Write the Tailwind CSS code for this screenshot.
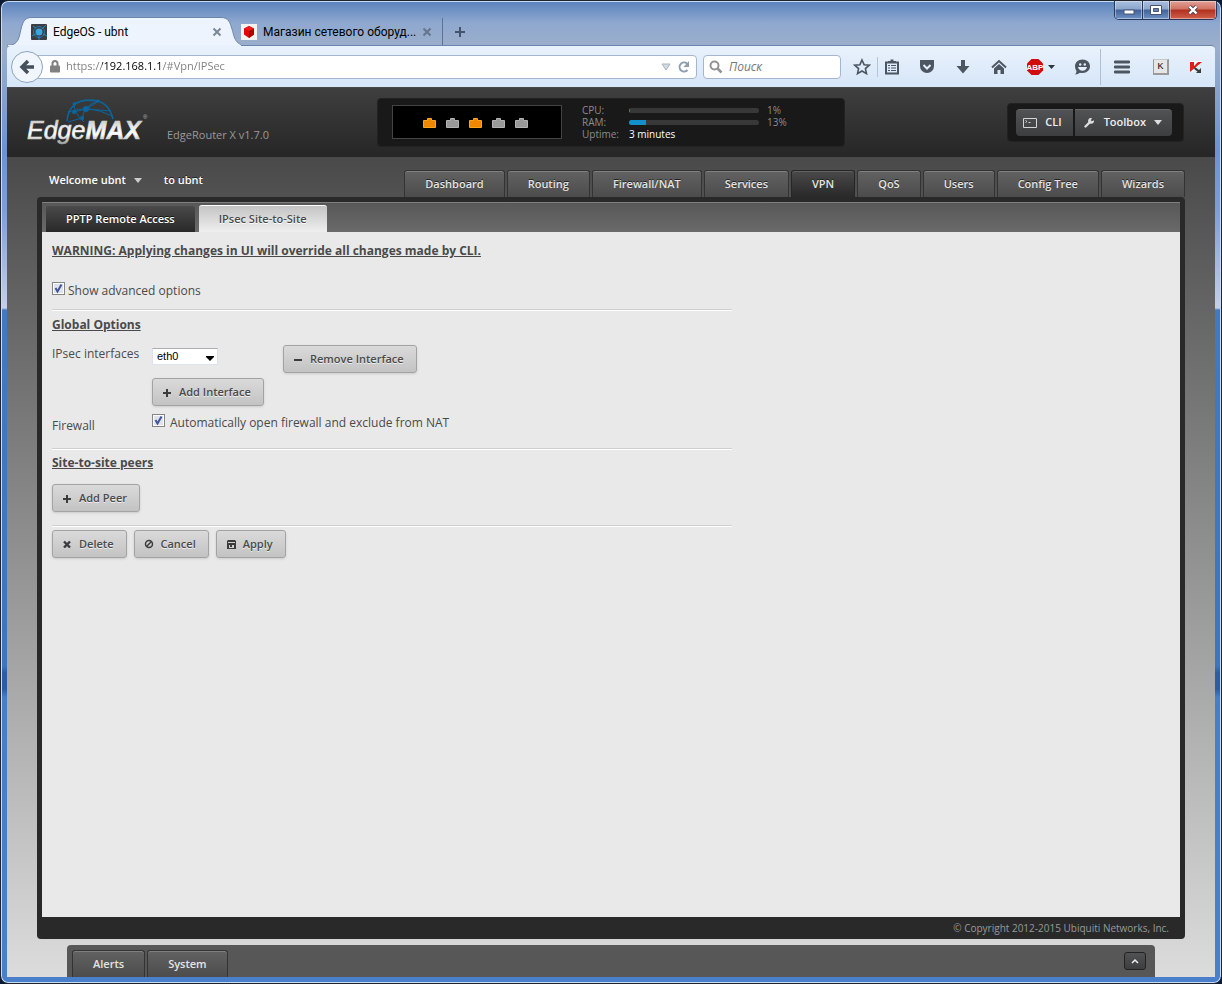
<!DOCTYPE html>
<html lang="en">
<head>
<meta charset="utf-8">
<meta name="viewport" content="width=device-width, initial-scale=1">
<title>EdgeOS - ubnt</title>
<script src="https://cdn.jsdelivr.net/npm/@tailwindcss/browser@4"></script>
</head>
<body class="bg-[#0b1a33] font-['Open_Sans','Noto_Sans',sans-serif] text-xs text-[#4a4a4a]">
<div class="relative flex min-h-screen flex-col rounded-lg border border-[#20242e] bg-[linear-gradient(to_bottom,#5a82bd_0px,#8fa8cf_22px,#9bafcb_45px,#6b93d2_150px,#7d9fd8_210px,#c5cfe8_307px,#4379c4_309px,#3f74c0_665px,#2d5ca5_672px,#2d5ca5_688px,#477dc9_696px,#4a7fcb_100%)] px-[6px] pb-[6px] shadow-[inset_0_0_0_1px_#c9dcf5]">

  <!-- window buttons -->
  <div class="absolute right-1 top-0 flex h-[19px] overflow-hidden rounded-b-[5px] border border-t-0 border-[#27375c]">
    <button aria-label="Minimize" class="flex w-7 items-center justify-center border-r border-[#27375c] bg-[linear-gradient(#a9bfdf,#8ba6cd_45%,#416199_50%,#6f93c6)] shadow-[inset_0_0_0_1px_#ffffff66]">
      <svg class="mt-1" width="12" height="6"><rect x="1" y="1" width="10" height="4" fill="#fff" stroke="#4a5470"/></svg>
    </button>
    <button aria-label="Maximize" class="flex w-[27px] items-center justify-center border-r border-[#27375c] bg-[linear-gradient(#a9bfdf,#8ba6cd_45%,#416199_50%,#6f93c6)] shadow-[inset_0_0_0_1px_#ffffff66]">
      <svg width="12" height="10"><path d="M.5.5h11v9H.5z" fill="#fff" stroke="#4a5470"/><path d="M3.500 3.500h5v3h-5z" fill="#6685b5" stroke="#4a5470"/></svg>
    </button>
    <button aria-label="Close window" class="flex w-[46px] items-center justify-center bg-[linear-gradient(#e2a196,#cf7162_45%,#b1301d_50%,#d0614c)] shadow-[inset_0_0_0_1px_#ffffff66]">
      <svg width="12" height="10"><path d="M2.500 1.500 9.500 8.500M9.500 1.500 2.500 8.500" stroke="#4c4550" stroke-width="4"/><path d="M2.500 1.500 9.500 8.500M9.500 1.500 2.500 8.500" stroke="#fff" stroke-width="2.400"/></svg>
    </button>
  </div>

  <!-- browser tabs -->
  <div class="flex h-11 items-end font-['Roboto','Open_Sans',sans-serif] text-black">
    <div class="relative z-10 -mb-px flex h-[29px] w-[234px] items-center pl-6 pr-[19px]">
      <svg class="absolute inset-0 h-full w-full" viewBox="0 0 234 29" preserveAspectRatio="none"><path d="M0 28.500C12 28.500 12 20 14 12S18 .5 25 .5H214C222 .5 223 6 225 12S227 28.500 240 28.500" fill="#edf4fd" stroke="#6a85ad"/><path d="M1 28.500H234" stroke="#e9f2fc"/></svg>
      <svg class="relative mr-[6px]" width="16" height="16"><rect width="16" height="16" rx="1" fill="#3a3e44"/><circle cx="8" cy="8" r="3.500" fill="#3aa6e0"/><circle cx="8" cy="8" r="5.500" fill="none" stroke="#2477a8"/><path d="M1 12 6 9M10 6 15 1M8 12v4M5 4 2 2M12 10l4 2" stroke="#2c86bd"/></svg>
      <span class="relative flex-1">EdgeOS - ubnt</span>
      <button aria-label="Close tab" class="relative"><svg width="10" height="10"><path d="M1.500 1.500 8.500 8.500M8.500 1.500 1.500 8.500" stroke="#7b8794" stroke-width="2"/></svg></button>
    </div>
    <div class="flex h-[27px] w-[202px] items-center border-r border-[#5d7294] pr-[10px]">
      <svg class="mr-[6px] shrink-0" width="16" height="16"><rect width="16" height="16" fill="#f3f3f3"/><path d="m8 2 5 2.500v6L8 14l-5-3.500v-6z" fill="#e00808"/><path d="m8 7 5-2.500v6L8 14z" fill="#b10000"/><path d="m8 2 5 2.500L8 7 3 4.500z" fill="#f01818"/></svg>
      <span class="flex-1 whitespace-nowrap">Магазин сетевого оборуд...</span>
      <button aria-label="Close tab"><svg width="10" height="10"><path d="M1.500 1.500 8.500 8.500M8.500 1.500 1.500 8.500" stroke="#64748b" stroke-width="2"/></svg></button>
    </div>
    <button aria-label="New tab" class="flex h-[27px] w-[34px] items-center justify-center"><svg width="12" height="12"><path d="M6 1v10M1 6h10" stroke="#45536a" stroke-width="2"/></svg></button>
  </div>

  <!-- navigation toolbar -->
  <div class="flex h-[42px] items-center rounded-t-sm border-t border-[#6a85ad] bg-linear-to-b from-[#e9f2fc] to-[#d6e6f8] pl-1 text-[#4c5661]">
    <button aria-label="Back" class="z-10 flex size-8 items-center justify-center rounded-full border border-[#8fa3bc] bg-[#f1f6fd]">
      <svg width="16" height="16"><path d="M9 2 3 8l6 6M3.500 8H15" fill="none" stroke="#46505b" stroke-width="3.500"/></svg>
    </button>
    <div class="-ml-[6px] flex h-6 flex-1 items-center rounded-r-sm border border-[#a3b6cd] bg-white pl-3 pr-[5px]">
      <svg class="mr-[6px]" width="10" height="13"><path d="M2.500 6V3.500a2.500 2.500 0 0 1 5 0V6" fill="none" stroke="#808080" stroke-width="2"/><rect y="5.500" width="10" height="7" rx="1" fill="#808080"/></svg>
      <input aria-label="Address" value="https://192.168.1.1/#Vpn/IPSec" class="min-w-0 flex-1 bg-[linear-gradient(to_right,#7d7d7d_36px,#000_36px,#000_95px,#7d7d7d_95px)] bg-clip-text text-[11px] text-transparent outline-none">
      <svg class="mr-[6px]" width="10" height="8"><path d="M1 1h8L5 7z" fill="#d5dbe3" stroke="#a9b4c1"/></svg>
      <button aria-label="Reload"><svg width="14" height="14"><path d="M10.500 10A4.500 4.500 0 1 1 10 3.600" fill="none" stroke="#8f9dad" stroke-width="2"/><path d="M12 1v6H6.500z" fill="#8f9dad"/></svg></button>
    </div>
    <label class="ml-[6px] flex h-6 w-[138px] items-center rounded-sm border border-[#a3b6cd] bg-white pl-[5px]">
      <svg class="mr-[6px] shrink-0" width="14" height="14"><circle cx="5.500" cy="5.500" r="4" fill="none" stroke="#939393" stroke-width="2"/><path d="m8.500 8.500 4 4" stroke="#939393" stroke-width="2.500"/></svg>
      <input aria-label="Search" placeholder="Поиск" class="w-full min-w-0 italic outline-none placeholder:text-[#777]">
    </label>
    <div class="ml-3 flex items-center">
      <button aria-label="Bookmark"><svg width="18" height="18"><path d="m9 2 2.100 4.700 5.100.5-3.800 3.400 1.100 5L9 13l-4.500 2.600 1.100-5L1.800 7.200l5.100-.5z" fill="none" stroke="currentColor" stroke-width="1.600"/></svg></button>
      <span class="mx-[6px] h-5 w-px bg-[#b5c4d6]"></span>
      <button aria-label="Bookmarks list"><svg width="16" height="16"><path d="M2 3.500h12v11H2z" fill="none" stroke="currentColor" stroke-width="2"/><path d="M4 4V2h2.500V.5h3V2H12v2z" fill="currentColor"/><path d="M4 6.500h2M7 6.500h5M4 9h2M7 9h5M4 11.500h2M7 11.500h5" stroke="currentColor" stroke-width="1.200"/></svg></button>
      <button aria-label="Pocket" class="ml-[19px]"><svg width="16" height="16"><path d="M1 1h14v6a7 7 0 0 1-14 0z" fill="currentColor"/><path d="m4.500 6 3.500 3.500L11.500 6" fill="none" stroke="#e4eefa" stroke-width="2"/></svg></button>
      <button aria-label="Downloads" class="ml-5"><svg width="16" height="16"><path d="M6 1h4v6h4.500L8 14.500 1.500 7H6z" fill="currentColor"/></svg></button>
      <button aria-label="Home" class="ml-5"><svg width="16" height="16"><path d="M1 8.500 8 2l7 6.500" fill="none" stroke="currentColor" stroke-width="2"/><path d="M3 9.500 8 5l5 4.500V15H9.500v-4h-3v4H3z" fill="currentColor"/></svg></button>
      <button aria-label="Adblock Plus" class="ml-[19px] flex items-center gap-1"><svg width="18" height="18"><path d="M5.500 1h7L17 5.500v7L12.500 17h-7L1 12.500v-7z" fill="#d00c0c"/><text x="9" y="12" text-anchor="middle" font-family="Liberation Sans" font-size="8" font-weight="700" fill="#fff">ABP</text></svg><svg width="7" height="4"><path d="M0 0h7L3.500 4z" fill="#2e353d"/></svg></button>
      <button aria-label="Hello" class="ml-[18px]"><svg width="18" height="16"><path d="M9.500.5C14 .5 17 3.500 17 7.300S14 14 9.500 14q-1.500 0-2.500-.3Q5 15.500 2 15.500 3.500 14 3.500 12 2 10 2 7.300C2 3.500 5 .5 9.500.5z" fill="currentColor"/><circle cx="7.200" cy="5.500" r="1.200" fill="#e4eefa"/><circle cx="11.800" cy="5.500" r="1.200" fill="#e4eefa"/><path d="M5 8h9q-1 3.800-4.500 3.800T5 8z" fill="#e4eefa"/></svg></button>
      <span class="ml-[9px] h-9 w-px bg-[#b0bfd2]"></span>
      <button aria-label="Menu" class="ml-[13px]"><svg width="16" height="14"><path d="M1 2h14M1 7h14M1 12h14" stroke="currentColor" stroke-width="2.800" stroke-linecap="round"/></svg></button>
      <button aria-label="Virtual keyboard" class="ml-[23px] flex size-4 items-center justify-center border border-b-2 border-r-2 border-[#9a9a9a] border-t-[#c8c8c8] bg-[#e6e6e6] font-['Liberation_Sans'] text-[9px] text-black">K</button>
      <button aria-label="Kaspersky" class="ml-5 mr-3"><svg width="14" height="14"><path d="M1 1h12L4 12H1z" fill="#fff"/><path d="M1 2h4v4l4-4h4L1 12z" fill="#e01b1b"/><path d="m6 7 4 3 2-2v5H7l1.500-1.500L5 9z" fill="#3a3f3c"/></svg></button>
    </div>
  </div>

  <!-- EdgeOS page -->
  <div class="flex flex-1 flex-col bg-[linear-gradient(to_bottom,#4a4a4a_70px,#dcdcdc_100%)]">
    <header class="grid h-[70px] grid-cols-[1fr_auto_1fr] items-center border-t border-[#484848] bg-linear-to-b from-[#3f3f3f] to-[#262626]">
      <div class="flex items-end pl-[18px]">
        <svg width="124" height="54" viewBox="0 0 124 54" role="img" aria-label="EdgeMAX">
          <defs><linearGradient id="metal" x1="0" y1="0" x2="0" y2="1"><stop offset="0" stop-color="#b5b5b5"/><stop offset=".35" stop-color="#e4e4e4"/><stop offset=".65" stop-color="#fff"/><stop offset="1" stop-color="#9a9a9a"/></linearGradient></defs>
          <g fill="none" stroke="#0b659f"><path d="M42 25C43 11 52 4 65 4S85 10 88 23" stroke-width="1.600"/><path d="M43 16Q64 8 87 20M49 7Q49 18 59 26M49 7Q60 3 73 5M73 5Q56 11 58 24M49 16 61 13 74 5M61 13 86 15M57 22 43 26"/></g>
          <g fill="#0b659f"><circle cx="61" cy="13" r="3"/><circle cx="49" cy="16" r="2"/><circle cx="57" cy="22" r="2"/><circle cx="49" cy="8" r="1.500"/><circle cx="73" cy="5" r="1.500"/></g>
          <text x="2" y="43" font-family="Liberation Sans" font-size="25" font-style="italic" fill="url(#metal)" stroke="url(#metal)" stroke-width=".6">Edge<tspan font-weight="700">MAX</tspan></text>
          <text x="118" y="23" font-family="Liberation Sans" font-size="6" fill="#bbb">®</text>
        </svg>
        <span class="mb-[7px] ml-[18px] text-[11px] text-[#9a9a9a]">EdgeRouter X v1.7.0</span>
      </div>

      <div class="flex h-[49px] w-[468px] items-start rounded-[4px] border border-[#222] bg-[#191919] pl-[14px] pt-[6px] text-[10px] leading-3 text-[#8c8c8c]">
        <div class="flex h-[34px] w-[170px] items-center justify-center gap-[10px] border border-[#444] bg-black pr-1 pt-[2px]">
          <svg width="13" height="10"><path d="M.5 2.500h4v-2h4v2h4v7H.5z" fill="#ef8700" stroke="#ffa51f"/></svg>
          <svg width="13" height="10"><path d="M.5 2.500h4v-2h4v2h4v7H.5z" fill="#999" stroke="#b3b3b3"/></svg>
          <svg width="13" height="10"><path d="M.5 2.500h4v-2h4v2h4v7H.5z" fill="#ef8700" stroke="#ffa51f"/></svg>
          <svg width="13" height="10"><path d="M.5 2.500h4v-2h4v2h4v7H.5z" fill="#999" stroke="#b3b3b3"/></svg>
          <svg width="13" height="10"><path d="M.5 2.500h4v-2h4v2h4v7H.5z" fill="#999" stroke="#b3b3b3"/></svg>
        </div>
        <div class="-mt-px ml-5 grid grid-cols-[47px_130px_auto] items-center">
          <span>CPU:</span>
          <span class="h-[5px] overflow-hidden rounded-sm bg-[#383838]"><span class="block h-full bg-[#1190cc]" style="width:1%"></span></span>
          <span class="pl-2">1%</span>
          <span>RAM:</span>
          <span class="h-[5px] overflow-hidden rounded-sm bg-[#383838]"><span class="block h-full bg-[#1190cc]" style="width:13%"></span></span>
          <span class="pl-2">13%</span>
          <span>Uptime:</span>
          <span class="col-span-2 text-white">3 minutes</span>
        </div>
      </div>

      <div class="flex justify-end pr-[31px]">
        <div class="mb-px flex gap-[2px] rounded-[4px] border border-[#222] bg-[#191919] py-[5px] pl-2 pr-[11px] text-[11px] font-semibold text-[#eee]">
          <button class="flex h-[27px] items-center gap-2 rounded-l-sm border-t border-[#666] bg-linear-to-b from-[#505254] to-[#3c3e40] pl-[7px] pr-[11px]">
            <svg width="14" height="10"><path d="M.5.5h13v9H.5z" fill="none" stroke="#d5d5d5"/><path d="m2.500 2.500 1.500 1-1.500 1M5.500 4.500h2" fill="none" stroke="#d5d5d5"/></svg>CLI
          </button>
          <button class="flex h-[27px] items-center rounded-r-sm border-t border-[#666] bg-linear-to-b from-[#505254] to-[#3c3e40] pl-[9px] pr-[10px]">
            <svg class="mr-[10px]" width="10" height="10"><path d="M1.500 8.500 6 4" stroke="#ddd" stroke-width="2.400" stroke-linecap="round"/><path d="M8 0 6.800 2.200l1 1L10 2.200A3 3 0 1 1 8 0z" fill="#ddd"/></svg>Toolbox
            <svg class="ml-2" width="8" height="5"><path d="M0 0h8L4 5z" fill="#ddd"/></svg>
          </button>
        </div>
      </div>
    </header>

    <div class="flex h-10 items-end justify-between pl-[42px] pr-[30px] text-[11px] font-semibold text-[#e4e4e4] [text-shadow:0_-1px_0_#222]">
      <div class="mb-[9px] flex items-center text-white">
        <button class="flex items-center">Welcome ubnt<svg class="ml-2" width="8" height="5"><path d="M0 0h8L4 5z" fill="#ccc"/></svg></button>
        <span class="ml-[22px]">to ubnt</span>
      </div>
      <nav class="flex gap-[2px]">
        <a href="#Dashboard" class="h-[27px] rounded-t-[3px] border border-b-0 border-[#333] bg-linear-to-b from-[#626262] to-[#4c4c4c] px-5 leading-[26px] shadow-[inset_0_1px_0_#808080]">Dashboard</a>
        <a href="#Routing" class="h-[27px] rounded-t-[3px] border border-b-0 border-[#333] bg-linear-to-b from-[#626262] to-[#4c4c4c] px-5 leading-[26px] shadow-[inset_0_1px_0_#808080]">Routing</a>
        <a href="#Firewall" class="h-[27px] rounded-t-[3px] border border-b-0 border-[#333] bg-linear-to-b from-[#626262] to-[#4c4c4c] px-5 leading-[26px] shadow-[inset_0_1px_0_#808080]">Firewall/NAT</a>
        <a href="#Services" class="h-[27px] rounded-t-[3px] border border-b-0 border-[#333] bg-linear-to-b from-[#626262] to-[#4c4c4c] px-5 leading-[26px] shadow-[inset_0_1px_0_#808080]">Services</a>
        <a href="#Vpn" aria-current="page" class="h-[27px] rounded-t-[3px] border border-b-0 border-[#262626] bg-linear-to-b from-[#4a4a4a] to-[#292929] px-5 leading-[26px] shadow-[inset_0_1px_0_#606060]">VPN</a>
        <a href="#Qos" class="h-[27px] rounded-t-[3px] border border-b-0 border-[#333] bg-linear-to-b from-[#626262] to-[#4c4c4c] px-5 leading-[26px] shadow-[inset_0_1px_0_#808080]">QoS</a>
        <a href="#Users" class="h-[27px] rounded-t-[3px] border border-b-0 border-[#333] bg-linear-to-b from-[#626262] to-[#4c4c4c] px-5 leading-[26px] shadow-[inset_0_1px_0_#808080]">Users</a>
        <a href="#ConfigTree" class="h-[27px] rounded-t-[3px] border border-b-0 border-[#333] bg-linear-to-b from-[#626262] to-[#4c4c4c] px-5 leading-[26px] shadow-[inset_0_1px_0_#808080]">Config Tree</a>
        <a href="#Wizards" class="h-[27px] rounded-t-[3px] border border-b-0 border-[#333] bg-linear-to-b from-[#626262] to-[#4c4c4c] px-5 leading-[26px] shadow-[inset_0_1px_0_#808080]">Wizards</a>
      </nav>
    </div>

    <main class="mx-[30px] flex flex-1 flex-col rounded-[4px] bg-[#292929] px-[5px] pt-[5px]">
      <div class="flex h-[30px] items-end gap-1 border-t border-[#808080] bg-linear-to-b from-[#585858] to-[#6a6a6a] pl-1 text-[11px] font-semibold">
        <a href="#Vpn/PPTP" class="h-[27px] rounded-t-[3px] border-t border-[#5a5a5a] bg-linear-to-b from-[#4a4a4a] to-[#292929] px-5 leading-[26px] text-white [text-shadow:0_-1px_0_#111]">PPTP Remote Access</a>
        <a href="#Vpn/IPSec" aria-current="page" class="h-[27px] rounded-t-[3px] border-t border-white bg-linear-to-b from-[#c4c4c4] to-[#efefef] px-5 leading-[26px] [text-shadow:0_1px_0_#fff]">IPsec Site-to-Site</a>
      </div>

      <form class="flex-1 bg-[#e9e9e9] px-[10px] pt-[11px]">
        <div class="max-w-[680px]">
          <p class="font-bold leading-4 underline">WARNING: Applying changes in UI will override all changes made by CLI.</p>
          <label class="mt-[23px] flex h-[17px] items-center gap-[3px]">
            <span class="relative -mt-1 size-[13px] shrink-0">
              <input type="checkbox" checked class="block size-[13px] appearance-none border border-[#848484] bg-[#dfe3ea] shadow-[inset_0_0_0_1px_#fff]">
              <svg class="pointer-events-none absolute inset-0" width="13" height="13"><path d="m3.500 6 2 3.500 4-7" fill="none" stroke="#41549c" stroke-width="2"/></svg>
            </span>
            Show advanced options
          </label>
          <hr class="mt-[10px] h-[2px] border-b border-t border-b-white border-t-[#cfcfcf]">
          <h2 class="mt-[6px] font-bold leading-4 underline">Global Options</h2>

          <div class="mt-3 grid grid-cols-[100px_131px_auto] items-start justify-start gap-y-[5px]">
            <label for="iface" class="leading-[18px]">IPsec interfaces</label>
            <div class="relative mt-[3px] h-[17px] w-[66px]">
              <select id="iface" class="h-full w-full appearance-none border border-[#dbe3ee] border-t-[#abadb3] bg-white pl-1 font-['Liberation_Sans'] text-[11px] leading-[13px] text-black"><option>eth0</option></select>
              <svg class="pointer-events-none absolute bottom-1 right-1" width="8" height="5"><path d="M0 0h8v1L4 5 0 1z" fill="#000"/></svg>
            </div>
            <button type="button" class="flex h-7 items-center gap-2 justify-self-start rounded-[3px] border border-[#a3a3a3] bg-linear-to-b from-[#dadada] to-[#c3c3c3] px-3 pl-[10px] text-[11px] font-semibold shadow-sm [text-shadow:0_1px_0_#eee]"><svg width="8" height="10"><path d="M0 6h8" stroke="#3c3c3c" stroke-width="2"/></svg>Remove Interface</button>
            <button type="button" class="col-start-2 flex h-7 items-center gap-2 justify-self-start rounded-[3px] border border-[#a3a3a3] bg-linear-to-b from-[#dadada] to-[#c3c3c3] px-3 pl-[10px] text-[11px] font-semibold shadow-sm [text-shadow:0_1px_0_#eee]"><svg width="8" height="10"><path d="M0 6h8M4 2v8" stroke="#3c3c3c" stroke-width="2"/></svg>Add Interface</button>
          </div>
          <div class="mt-[8px] grid grid-cols-[100px_1fr] items-start">
            <span class="pt-[3px] leading-[18px]">Firewall</span>
            <label class="flex h-[17px] items-center gap-[5px]">
              <span class="relative -mt-1 size-[13px] shrink-0">
                <input type="checkbox" checked class="block size-[13px] appearance-none border border-[#848484] bg-[#dfe3ea] shadow-[inset_0_0_0_1px_#fff]">
                <svg class="pointer-events-none absolute inset-0" width="13" height="13"><path d="m3.500 6 2 3.500 4-7" fill="none" stroke="#41549c" stroke-width="2"/></svg>
              </span>
              Automatically open firewall and exclude from NAT
            </label>
          </div>
          <hr class="mt-[13px] h-[2px] border-b border-t border-b-white border-t-[#cfcfcf]">
          <h2 class="mt-[5px] font-bold leading-4 underline">Site-to-site peers</h2>
          <button type="button" class="mt-[13px] flex h-7 items-center gap-2 rounded-[3px] border border-[#a3a3a3] bg-linear-to-b from-[#dadada] to-[#c3c3c3] px-3 pl-[10px] text-[11px] font-semibold shadow-sm [text-shadow:0_1px_0_#eee]"><svg width="8" height="10"><path d="M0 6h8M4 2v8" stroke="#3c3c3c" stroke-width="2"/></svg>Add Peer</button>
          <hr class="mt-[13px] h-[2px] border-b border-t border-b-white border-t-[#cfcfcf]">
          <div class="mt-[3px] flex gap-[7px]">
            <button type="button" class="flex h-7 items-center gap-2 rounded-[3px] border border-[#a3a3a3] bg-linear-to-b from-[#dadada] to-[#c3c3c3] px-3 pl-[10px] text-[11px] font-semibold shadow-sm [text-shadow:0_1px_0_#eee]"><svg width="8" height="8"><path d="m1 1.500 6 6M7 1.500l-6 6" stroke="#3c3c3c" stroke-width="2.400"/></svg>Delete</button>
            <button type="button" class="flex h-7 items-center gap-[7px] rounded-[3px] border border-[#a3a3a3] bg-linear-to-b from-[#dadada] to-[#c3c3c3] px-3 pl-[9px] text-[11px] font-semibold shadow-sm [text-shadow:0_1px_0_#eee]"><svg width="10" height="10"><circle cx="5" cy="5" r="3.500" fill="none" stroke="#3c3c3c" stroke-width="1.500"/><path d="M7.500 2.500l-5 5" stroke="#3c3c3c" stroke-width="1.500"/></svg>Cancel</button>
            <button type="button" class="flex h-7 items-center gap-[7px] rounded-[3px] border border-[#a3a3a3] bg-linear-to-b from-[#dadada] to-[#c3c3c3] px-3 pl-[10px] text-[11px] font-semibold shadow-sm [text-shadow:0_1px_0_#eee]"><svg width="9" height="10"><path d="M1 1h7l1 1v8H0V2z" fill="#3c3c3c"/><path d="M1 3h7v1H1zM2 6h5v3H2z" fill="#d0d0d0"/><path d="M3 6h2v2H3z" fill="#3c3c3c"/></svg>Apply</button>
          </div>
        </div>
      </form>
      <p class="h-[22px] pr-[11px] text-right text-[10px] leading-[22px] text-[#999]">© Copyright 2012-2015 Ubiquiti Networks, Inc.</p>
    </main>

    <footer class="mx-[60px] mt-[6px] flex h-8 items-end justify-between rounded-t-[4px] bg-[#575757] pl-[5px] pr-[9px] text-[11px] font-semibold text-[#e4e4e4] [text-shadow:0_-1px_0_#222]">
      <div class="flex gap-[2px]">
        <button class="h-[27px] rounded-t-[3px] border border-b-0 border-[#333] bg-linear-to-b from-[#626262] to-[#4c4c4c] px-5 shadow-[inset_0_1px_0_#808080]">Alerts</button>
        <button class="h-[27px] rounded-t-[3px] border border-b-0 border-[#333] bg-linear-to-b from-[#626262] to-[#4c4c4c] px-5 shadow-[inset_0_1px_0_#808080]">System</button>
      </div>
      <button aria-label="Expand" class="mb-[7px] flex h-[18px] w-[22px] items-center justify-center rounded-[3px] border border-[#222] bg-linear-to-b from-[#505254] to-[#3c3e40]"><svg width="8" height="6"><path d="M1 5 4 2l3 3" fill="none" stroke="#eee" stroke-width="1.500"/></svg></button>
    </footer>
  </div>
</div>
</body>
</html>
